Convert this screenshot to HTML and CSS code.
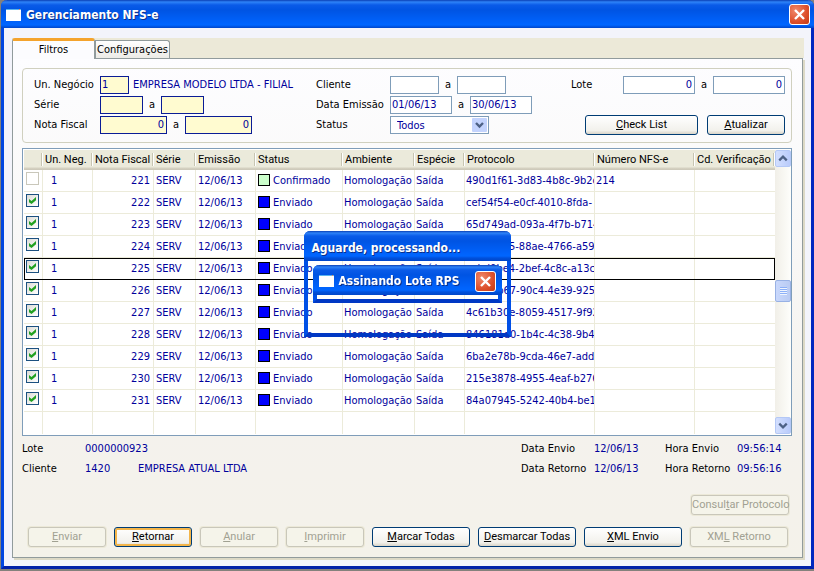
FILE: index.html
```
<!DOCTYPE html>
<html lang="pt-BR">
<head>
<meta charset="utf-8">
<title>Gerenciamento NFS-e</title>
<link rel="stylesheet" href="styles.css">
</head>
<body>
<main class="window">
  <header class="titlebar">
    <svg class="app-icon" viewBox="0 0 15 12" aria-hidden="true"><path fill="#fff" d="M0 0h15v12H0z"/><path fill="#59b4f0" d="M0 0h15v1H0z"/><path fill="#f58a4b" d="M13 0h1v1h-1z"/></svg>
    <h1>Gerenciamento NFS-e</h1>
    <button class="close" type="button" aria-label="Fechar"><svg viewBox="0 0 19 19" aria-hidden="true"><path d="M5 5l9 9M14 5l-9 9" stroke="#fff" stroke-width="2.4"/></svg></button>
  </header>
  <div class="client">
    <nav class="tabs" role="tablist">
      <button class="tab active" type="button" role="tab" aria-selected="true">Filtros</button>
      <button class="tab" type="button" role="tab" aria-selected="false">Configurações</button>
    </nav>
    <section class="panel">
      <form class="filters">
        <div class="group g1">
          <div class="line"><label for="un">Un. Negócio</label><input id="un" class="req w-s" value="1"><span class="val">EMPRESA MODELO LTDA - FILIAL</span></div>
          <div class="line"><label for="se1">Série</label><input id="se1" class="req w-m"><label class="to" for="se2">a</label><input id="se2" class="req w-m"></div>
          <div class="line"><label for="nf1">Nota Fiscal</label><input id="nf1" class="req w-l num" value="0"><label class="to" for="nf2">a</label><input id="nf2" class="req w-l num" value="0"></div>
        </div>
        <div class="group g2">
          <div class="line"><label for="cl1">Cliente</label><input id="cl1" class="w-c"><label class="to" for="cl2">a</label><input id="cl2" class="w-c"></div>
          <div class="line"><label for="de1">Data Emissão</label><input id="de1" class="w-d" value="01/06/13"><label class="to" for="de2">a</label><input id="de2" class="w-d" value="30/06/13"></div>
          <div class="line"><label for="st">Status</label><span class="combo"><select id="st"><option>Todos</option></select><svg viewBox="0 0 15 14" aria-hidden="true"><rect width="15" height="14" rx="1" fill="#c3d3fd"/><path d="M4 5l3.500 3.500L11 5" fill="none" stroke="#4d6185" stroke-width="2.400"/></svg></span></div>
        </div>
        <div class="group g3">
          <div class="line"><label for="lo1">Lote</label><input id="lo1" class="w-n num" value="0"><label class="to" for="lo2">a</label><input id="lo2" class="w-n num" value="0"></div>
          <div class="actions"><button class="btn check" type="button"><u>C</u>heck List</button><button class="btn short" type="button"><u>A</u>tualizar</button></div>
        </div>
      </form>

      <div class="grid">
        <table>
          <colgroup><col class="c1"><col class="c2"><col class="c3"><col class="c4"><col class="c5"><col class="c6"><col class="c7"><col class="c8"><col class="c9"><col class="c10"><col></colgroup>
          <thead><tr><th></th><th>Un. Neg.</th><th>Nota Fiscal</th><th>Série</th><th>Emissão</th><th>Status</th><th>Ambiente</th><th>Espécie</th><th>Protocolo</th><th>Número NFS-e</th><th>Cd. Verificação</th></tr></thead>
          <tbody>
            <tr><td><input type="checkbox" aria-label="Nota 221"></td><td>1</td><td>221</td><td>SERV</td><td>12/06/13</td><td><i class="ok"></i>Confirmado</td><td>Homologação</td><td>Saída</td><td>490d1f61-3d83-4b8c-9b2c</td><td>214</td><td></td></tr>
            <tr><td><input type="checkbox" checked aria-label="Nota 222"></td><td>1</td><td>222</td><td>SERV</td><td>12/06/13</td><td><i></i>Enviado</td><td>Homologação</td><td>Saída</td><td>cef54f54-e0cf-4010-8fda-</td><td></td><td></td></tr>
            <tr><td><input type="checkbox" checked aria-label="Nota 223"></td><td>1</td><td>223</td><td>SERV</td><td>12/06/13</td><td><i></i>Enviado</td><td>Homologação</td><td>Saída</td><td>65d749ad-093a-4f7b-b714</td><td></td><td></td></tr>
            <tr><td><input type="checkbox" checked aria-label="Nota 224"></td><td>1</td><td>224</td><td>SERV</td><td>12/06/13</td><td><i></i>Enviado</td><td>Homologação</td><td>Saída</td><td>b2c71e45-88ae-4766-a59</td><td></td><td></td></tr>
            <tr class="current"><td><input type="checkbox" checked aria-label="Nota 225"></td><td>1</td><td>225</td><td>SERV</td><td>12/06/13</td><td><i></i>Enviado</td><td>Homologação</td><td>Saída</td><td>ecbd0be4-2bef-4c8c-a13c</td><td></td><td></td></tr>
            <tr><td><input type="checkbox" checked aria-label="Nota 226"></td><td>1</td><td>226</td><td>SERV</td><td>12/06/13</td><td><i></i>Enviado</td><td>Homologação</td><td>Saída</td><td>1d40ab67-90c4-4e39-925</td><td></td><td></td></tr>
            <tr><td><input type="checkbox" checked aria-label="Nota 227"></td><td>1</td><td>227</td><td>SERV</td><td>12/06/13</td><td><i></i>Enviado</td><td>Homologação</td><td>Saída</td><td>4c61b30e-8059-4517-9f92</td><td></td><td></td></tr>
            <tr><td><input type="checkbox" checked aria-label="Nota 228"></td><td>1</td><td>228</td><td>SERV</td><td>12/06/13</td><td><i></i>Enviado</td><td>Homologação</td><td>Saída</td><td>846181d0-1b4c-4c38-9b4b</td><td></td><td></td></tr>
            <tr><td><input type="checkbox" checked aria-label="Nota 229"></td><td>1</td><td>229</td><td>SERV</td><td>12/06/13</td><td><i></i>Enviado</td><td>Homologação</td><td>Saída</td><td>6ba2e78b-9cda-46e7-add</td><td></td><td></td></tr>
            <tr><td><input type="checkbox" checked aria-label="Nota 230"></td><td>1</td><td>230</td><td>SERV</td><td>12/06/13</td><td><i></i>Enviado</td><td>Homologação</td><td>Saída</td><td>215e3878-4955-4eaf-b276</td><td></td><td></td></tr>
            <tr><td><input type="checkbox" checked aria-label="Nota 231"></td><td>1</td><td>231</td><td>SERV</td><td>12/06/13</td><td><i></i>Enviado</td><td>Homologação</td><td>Saída</td><td>84a07945-5242-40b4-be1</td><td></td><td></td></tr>
            <tr class="filler"><td></td><td></td><td></td><td></td><td></td><td></td><td></td><td></td><td></td><td></td><td></td></tr>
          </tbody>
        </table>
        <div class="scroll">
          <button type="button" aria-label="Subir"><svg viewBox="0 0 14 16" aria-hidden="true"><path d="M3 10l4-4 4 4" fill="none" stroke="#4d6185" stroke-width="2.400"/></svg></button>
          <span class="space-a"></span>
          <span class="thumb"></span>
          <span class="space-b"></span>
          <button type="button" aria-label="Descer"><svg viewBox="0 0 14 16" aria-hidden="true"><path d="M3 6l4 4 4-4" fill="none" stroke="#4d6185" stroke-width="2.400"/></svg></button>
        </div>
      </div>

      <div class="info">
        <dl class="left"><dt>Lote</dt><dd>0000000923</dd><dt>Cliente</dt><dd><span class="code">1420</span>EMPRESA ATUAL LTDA</dd></dl>
        <dl class="right"><dt>Data Envio</dt><dd>12/06/13</dd><dt>Hora Envio</dt><dd>09:56:14</dd><dt>Data Retorno</dt><dd>12/06/13</dd><dt>Hora Retorno</dt><dd>09:56:16</dd></dl>
      </div>

      <footer class="buttons">
        <div class="upper"><button class="btn long" type="button" disabled>Consul<u>t</u>ar Protocolo</button></div>
        <div class="lower">
          <button class="btn short" type="button" disabled><u>E</u>nviar</button>
          <button class="btn short default" type="button"><u>R</u>etornar</button>
          <button class="btn short" type="button" disabled><u>A</u>nular</button>
          <button class="btn short" type="button" disabled><u>I</u>mprimir</button>
          <button class="btn long" type="button"><u>M</u>arcar Todas</button>
          <button class="btn long" type="button"><u>D</u>esmarcar Todas</button>
          <button class="btn long" type="button"><u>X</u>ML Envio</button>
          <button class="btn long" type="button" disabled>XM<u>L</u> Retorno</button>
        </div>
      </footer>
    </section>
  </div>
</main>

<div class="overlay">
  <section class="dialog" role="dialog" aria-label="Aguarde, processando...">
    <h2 class="dialog-title">Aguarde, processando...</h2>
    <section class="dialog inner" role="dialog" aria-label="Assinando Lote RPS">
      <header class="dialog-title">
        <svg class="app-icon" viewBox="0 0 15 12" aria-hidden="true"><path fill="#fff" d="M0 0h15v12H0z"/><path fill="#59b4f0" d="M0 0h15v1H0z"/><path fill="#f58a4b" d="M13 0h1v1h-1z"/></svg>
        <h2>Assinando Lote RPS</h2>
        <button class="close" type="button" aria-label="Fechar"><svg viewBox="0 0 19 19" aria-hidden="true"><path d="M5 5l9 9M14 5l-9 9" stroke="#fff" stroke-width="2.4"/></svg></button>
      </header>
    </section>
  </section>
</div>
</body>
</html>
```
FILE: styles.css
```
:root {
  --ui: "DejaVu Sans Condensed", "Noto Sans", sans-serif;
  --narrow: Roboto, "Liberation Sans", sans-serif;
  --navy: #00009c;
  --title: linear-gradient(#0a3fb4 0, #2e83f8 2px, #0a5be8 5px, #0054e3 10px, #0062fb 22px, #0066ff 25px, #0050dc 27px, #0046c8 100%);
}
* { box-sizing: border-box; }
body { margin: 0; background: #84817c; font: 11px/18px var(--ui); color: #000; }
h1, h2, dl, dd { margin: 0; }
button, input, select { font: inherit; color: inherit; margin: 0; }

.window {
  display: flex;
  flex-direction: column;
  min-height: calc(100vh - 2px);
  margin: 0 0 2px 1px;
  border: solid #0046e0;
  border-width: 0 3px 3px;
  border-bottom-color: #0020a8;
  border-right-color: #0028c0;
  border-radius: 6px 6px 0 0;
  background: #f3f4fb;
}
.titlebar {
  display: flex;
  align-items: center;
  gap: 5px;
  height: 28px;
  margin: 0 -3px;
  padding: 1px 4px 0 5px;
  border-radius: 6px 6px 0 0;
  background: var(--title);
  color: #fff;
}
.app-icon { width: 15px; height: 12px; flex: none; }
h1, h2 { flex: 1; font: bold 12px/18px var(--ui); color: #fff; text-shadow: 1px 1px 0 #0a2f8a; }
.close {
  flex: none;
  width: 21px;
  height: 21px;
  padding: 0;
  border: 1px solid #fff;
  border-radius: 3px;
  background: radial-gradient(circle at 30% 30%, #f0886a, #dd4f2b 60%, #c43a14);
}
.close svg { display: block; width: 19px; height: 19px; }

.client { flex: 1; display: flex; flex-direction: column; padding: 10px 7px 8px 8px; }
.tabs { display: flex; align-items: flex-end; height: 20px; background: #ece9d8; }
.tab {
  height: 18px;
  padding: 0 1px;
  border: 1px solid #919b9c;
  border-bottom: 0;
  border-radius: 0 3px 0 0;
  background: linear-gradient(#fff, #ecebe6);
  font-size: 11px;
  line-height: 16px;
}
.tab.active {
  position: relative;
  width: 83px;
  height: 21px;
  margin-bottom: -1px;
  border-top: 3px solid #f4a32c;
  border-radius: 3px 3px 0 0;
  background: #fcfcfe;
  line-height: 14px;
}
.panel {
  flex: 1;
  display: flex;
  flex-direction: column;
  margin-right: 1px;
  padding: 9px 10px 10px 9px;
  border: 1px solid #919b9c;
  background: linear-gradient(#fdfdff, #f4f2ed 75%, #f4f2ea);
  box-shadow: 2px 2px 0 #dcd9c6;
}

.filters { display: flex; padding: 7px 6px; border: 1px solid #d0d0bf; border-radius: 4px; }
.group { display: flex; flex-direction: column; gap: 2px; }
.line { display: flex; height: 18px; }
.g1 { width: 281px; padding-left: 5px; }
.g2 { flex: 1; padding-left: 6px; }
.g3 { width: 214px; }
.g1 .line > label:first-child { width: 66px; }
.g2 .line > label:first-child { width: 74px; }
.g3 .line > label:first-child { flex: 1; }
.line .to { flex: none; width: 18px; text-align: center; }
.val { margin-left: 4px; color: var(--navy); white-space: nowrap; }
.line input {
  height: 18px;
  padding: 0 2px 0 1px;
  border: 1px solid #7f9db9;
  border-radius: 0;
  background: #fff;
  color: var(--navy);
}
.line .req { border-color: #0a1c96; background: #fffbd0; }
.num { text-align: right; }
.w-s { width: 29px; }
.w-m { width: 43px; }
.w-l { width: 67px; }
.w-c { width: 49px; }
.w-d { width: 62px; }
.w-n { width: 72px; }
.combo { display: grid; width: 99px; }
.combo > * { grid-area: 1 / 1; }
.combo svg { width: 15px; height: 14px; justify-self: end; align-self: center; margin-right: 2px; pointer-events: none; }
.combo select {
  appearance: none;
  height: 18px;
  padding: 0 6px;
  border: 1px solid #7f9db9;
  border-radius: 0;
  background: #fff;
  color: var(--navy);
}
.actions { display: flex; justify-content: flex-end; gap: 9px; margin-top: 19px; }

.btn {
  height: 20px;
  padding: 0;
  border: 1px solid #003c74;
  border-radius: 3px;
  background: linear-gradient(#fff, #f2f1ec 80%, #d9d4c8);
  font: 11px/18px var(--narrow);
  white-space: nowrap;
}
.btn.short { width: 78px; }
.btn.long { width: 98px; }
.btn.check { width: 113px; }
.btn.default { box-shadow: inset 0 0 0 2px #f3b54a; }
.btn:disabled { border-color: #c9c7ba; background: #f5f4ea; color: #a1a192; box-shadow: 0 0 0 1px #ece9d8; }

.grid { display: flex; margin-top: 5px; padding: 1px 0 1px 1px; border: 1px solid #7f9db9; background: #fff; }
table { flex: 1; width: 0; table-layout: fixed; border-collapse: separate; border-spacing: 0; }
.c1 { width: 19px; }
.c2, .c8 { width: 50px; }
.c3 { width: 61px; }
.c4 { width: 42px; }
.c5 { width: 60px; }
.c6 { width: 87px; }
.c7 { width: 72px; }
.c9 { width: 130px; }
.c10 { width: 100px; }
th {
  height: 20px;
  padding: 0 0 0 2px;
  background:
    linear-gradient(#c7c5b2, #c7c5b2) right 1px top 3px / 1px 13px no-repeat,
    linear-gradient(#fff, #fff) right 0 top 3px / 1px 13px no-repeat,
    linear-gradient(#ebeadb 17px, #d6d2c2 18px, #cbc7b8);
  font: 11px/18px var(--narrow);
  text-align: left;
  white-space: nowrap;
}
td {
  height: 22px;
  padding: 0 0 0 2px;
  border: solid #ecebda;
  border-width: 0 1px 1px 0;
  color: var(--navy);
  line-height: 20px;
  white-space: nowrap;
  overflow: hidden;
}
td:nth-child(2) { padding-left: 8px; }
td:nth-child(3) { padding-right: 3px; text-align: right; }
td:nth-child(n+7) { padding-left: 1px; }
td:nth-child(6) i {
  display: inline-block;
  width: 12px;
  height: 12px;
  margin-right: 3px;
  border: 1px solid #000;
  background: #00f;
  vertical-align: -2px;
}
td:nth-child(6) i.ok { background: #cfc; }
td:last-child { border-right: 0; }
.filler td { border-bottom: 0; }
.current { outline: 1px solid #000; outline-offset: -1px; }
td input {
  appearance: none;
  display: block;
  width: 13px;
  height: 13px;
  margin-bottom: 4px;
  border: 1px solid #c9c7ba;
  background: #fff;
}
td input:checked { border-color: #1c5180; background: linear-gradient(135deg, #dcdcd7, #fff); }
td input:checked::before {
  content: "";
  display: block;
  width: 7px;
  height: 7px;
  margin: 2px;
  background: #21a121;
  clip-path: polygon(0 28%, 36% 56%, 100% 0, 100% 46%, 36% 100%, 0 76%);
}

.scroll { display: flex; flex-direction: column; width: 16px; background: linear-gradient(90deg, #f1efe8, #fefefb); }
.scroll button, .thumb {
  flex: none;
  height: 17px;
  padding: 0;
  border: 1px solid #b4c8f6;
  border-radius: 2px;
  background: linear-gradient(90deg, #d3dffe, #b9cbfb);
}
.scroll svg { display: block; width: 14px; height: 15px; }
.thumb {
  height: 22px;
  border-color: #98b1e4;
  background:
    repeating-linear-gradient(#8cb0f8 0 1px, #eef4fe 1px 2px) center / 7px 8px no-repeat,
    linear-gradient(90deg, #c9d8fc, #b9cbf3);
}
.space-a { flex: 113; }
.space-b { flex: 115; }

.info { display: flex; justify-content: space-between; padding-top: 3px; line-height: 20px; }
.info dl { display: grid; white-space: nowrap; }
.info .left { grid-template-columns: 63px auto; }
.info .right { grid-template-columns: 73px 71px 72px 55px; }
.info dd { color: var(--navy); }
.code { display: inline-block; width: 53px; }

.buttons { display: flex; flex-direction: column; gap: 12px; margin-top: auto; padding: 0 3px 0 6px; }
.upper { display: flex; justify-content: flex-end; }
.lower { display: flex; gap: 8px; }

.overlay { position: fixed; inset: 0; display: grid; place-items: center; padding-bottom: 3px; pointer-events: none; }
.dialog {
  width: 207px;
  height: 106px;
  border: solid #0050e6;
  border-width: 0 4px 4px;
  border-bottom-color: #0038c4;
  border-radius: 6px 6px 0 0;
}
.dialog-title {
  display: flex;
  align-items: center;
  gap: 5px;
  height: 30px;
  margin: 0 -4px;
  padding: 3px 8px 0;
  border-radius: 6px 6px 0 0;
  background: var(--title);
}
.inner { width: auto; height: 38px; margin: 4px 5px 0; pointer-events: auto; }
.inner .dialog-title { padding: 2px 6px 0; }
```
